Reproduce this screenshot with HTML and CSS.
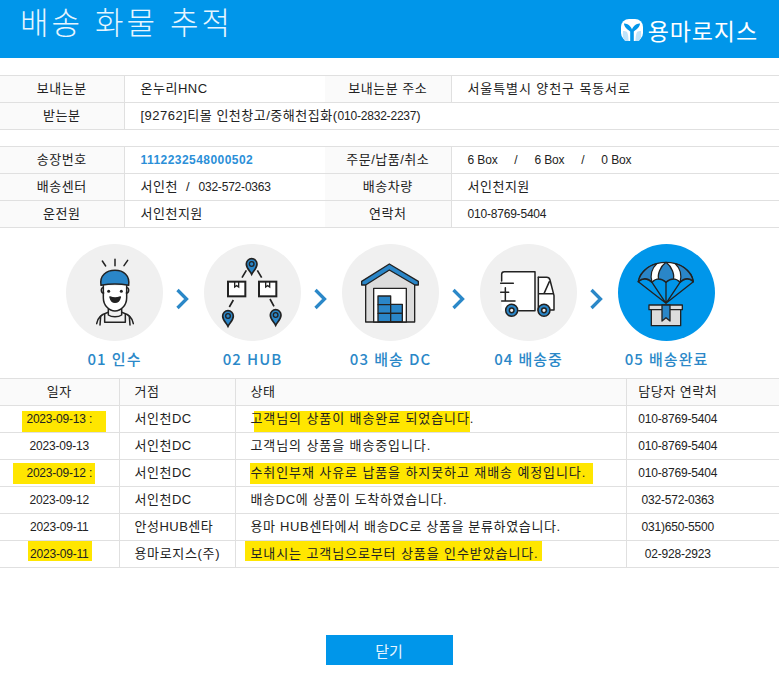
FILE: index.html
```html
<!DOCTYPE html>
<html lang="ko">
<head>
  <meta charset="UTF-8">
  <title>배송 화물 추적</title>
  <link rel="stylesheet" href="styles.css">
</head>
<body>
  <header class="top">
    <h1>배송 화물 추적</h1>
    <div class="logo">
      <svg class="logo-mark" viewBox="0 0 22 22">
        <rect width="22" height="22" rx="8" fill="#fff"/>
        <path d="M3 4.500 C6 4 10 7 11 10.500 C12 7 16 4 19 4.500 C19 8 15 11 12.800 12.500 V22 H9.200 V12.500 C7 11 3 8 3 4.500 Z" fill="#0096ea"/>
        <path d="M6 13 C7 15 7.500 18 7.500 22 H4 C2 20 1.500 17 2 12 C3.500 12 5 12.400 6 13 Z M16 13 C15 15 14.500 18 14.500 22 H18 C20 20 20.500 17 20 12 C18.500 12 17 12.400 16 13 Z" fill="#bfe3fa"/>
      </svg>
      <span>용마로지스</span>
    </div>
  </header>

  <table class="info first">
    <colgroup><col class="c1"><col class="c2"><col class="c3"><col></colgroup>
    <tr>
      <th>보내는분</th><td>온누리HNC</td>
      <th>보내는분 주소</th><td class="wide">서울특별시 양천구 목동서로</td>
    </tr>
    <tr>
      <th>받는분</th><td colspan="3">[92762]티몰 인천창고/중해천집화(<span class="num">010-2832-2237</span>)</td>
    </tr>
  </table>

  <table class="info">
    <colgroup><col class="c1"><col class="c2"><col class="c3"><col></colgroup>
    <tr>
      <th>송장번호</th><td class="invoice">1112232548000502</td>
      <th>주문/납품/취소</th><td class="num boxes">6 Box &nbsp;&nbsp;&nbsp;&nbsp;/&nbsp;&nbsp;&nbsp;&nbsp; 6 Box &nbsp;&nbsp;&nbsp;&nbsp;/&nbsp;&nbsp;&nbsp;&nbsp; 0 Box</td>
    </tr>
    <tr>
      <th>배송센터</th><td>서인천 &nbsp;/&nbsp; <span class="num">032-572-0363</span></td>
      <th>배송차량</th><td>서인천지원</td>
    </tr>
    <tr>
      <th>운전원</th><td>서인천지원</td>
      <th>연락처</th><td class="num">010-8769-5404</td>
    </tr>
  </table>

  <div class="steps">
    <div class="step">
      <div class="circle">
        <svg viewBox="48 27 291 291">
          <g fill="none" stroke="#222" stroke-width="4.500" stroke-linecap="round" stroke-linejoin="round">
            <path d="M157 78 L167 93 M195 73 V92 M233 76 L222 92"/>
            <path d="M160 152 V188 C160 212 178 228 195 228 C212 228 230 212 230 188 V152" fill="#fff"/>
            <path d="M159 158 C152 158 152 174 161 174 M231 158 C238 158 238 174 229 174"/>
            <path d="M153 151 C148 120 170 106 195 106 C220 106 240 120 236 151 C210 146 180 146 153 151 Z" fill="#2a86c8"/>
            <path d="M175 222 V240 C185 247 205 247 215 240 V222"/>
            <path d="M140 266 C142 248 155 238 175 232 M250 266 C248 248 235 238 215 232"/>
            <path d="M164 236 V262 H226 V236 M152 244 L150 270 M238 244 L240 270"/>
            <path d="M180 186 Q195 192 211 186 Q207 202 195 202 Q184 202 180 186 Z" fill="#222"/>
          </g>
          <circle cx="176" cy="169" r="4.500" fill="#222"/>
          <circle cx="214" cy="169" r="4.500" fill="#222"/>
        </svg>
      </div>
      <div class="step-name">01 인수</div>
    </div>
    <svg class="chevron" viewBox="0 0 14 22"><path d="M2 2 L11 11 L2 20"/></svg>
    <div class="step">
      <div class="circle">
        <svg viewBox="462 27 291 291">
          <defs>
            <g id="pin">
              <path d="M0 28 C-5 18 -16 10 -16 -3 A16 16 0 0 1 16 -3 C16 10 5 18 0 28 Z" fill="#2a86c8" stroke="#222" stroke-width="5"/>
              <circle cy="-3" r="7" fill="#2a86c8" stroke="#222" stroke-width="4"/>
            </g>
            <g id="parcel" fill="none" stroke="#222" stroke-width="6">
              <rect x="0" y="0" width="52" height="44" fill="#fff"/>
              <path d="M20 0 V16 L26 12 L32 16 V0" stroke-width="4"/>
            </g>
          </defs>
          <use href="#pin" x="605" y="90"/>
          <use href="#pin" x="534" y="246"/>
          <use href="#pin" x="677" y="243"/>
          <use href="#parcel" x="534" y="140"/>
          <use href="#parcel" x="627" y="140"/>
          <path d="M589 106 L576 128 M622 106 L635 128 M550 195 L538 216 M660 192 L672 214" fill="none" stroke="#222" stroke-width="5"/>
        </svg>
      </div>
      <div class="step-name">02 HUB</div>
    </div>
    <svg class="chevron" viewBox="0 0 14 22"><path d="M2 2 L11 11 L2 20"/></svg>
    <div class="step">
      <div class="circle">
        <svg viewBox="126 27 291 291">
          <g stroke="#222" stroke-width="4" stroke-linejoin="round">
            <path d="M197 146 L268 103 L344 146 V261 H197 Z" fill="#dcdcdc"/>
            <path d="M185 150 V139 L268 87 L355 139 V150 H345 L268 105 L197 150 Z" fill="#2a86c8"/>
            <rect x="221" y="160" width="98" height="101" fill="#fff"/>
            <rect x="234" y="183" width="38" height="26" fill="#2a86c8"/>
            <rect x="234" y="209" width="38" height="26" fill="#2a86c8"/>
            <rect x="234" y="235" width="38" height="25" fill="#2a86c8"/>
            <rect x="272" y="208" width="35" height="27" fill="#2a86c8"/>
            <rect x="272" y="235" width="35" height="25" fill="#2a86c8"/>
          </g>
        </svg>
      </div>
      <div class="step-name">03 배송 DC</div>
    </div>
    <svg class="chevron" viewBox="0 0 14 22"><path d="M2 2 L11 11 L2 20"/></svg>
    <div class="step">
      <div class="circle">
        <svg viewBox="60 27 291 291">
          <path d="M125 110 H225 V227 H125 Z M235 127 H262 L282 182 V225 H235 Z" fill="#fff"/>
          <g fill="none" stroke="#222" stroke-width="4.500" stroke-linejoin="round" stroke-linecap="round">
            <path d="M125 138 V118 Q125 110 133 110 H225 V227 H176"/>
            <path d="M122 145 H160 M122 172 H146 M125 198 H165 M136 158 V198"/>
            <path d="M235 127 H260 Q268 127 270 135 L282 182 V225 H272"/>
            <path d="M235 176 H252 L268 140 M235 127 V227 M252 176 H280"/>
            <circle cx="155" cy="226" r="18" fill="#2a86c8"/>
            <circle cx="155" cy="226" r="7" fill="#f0f0f0"/>
            <circle cx="252" cy="226" r="18" fill="#2a86c8"/>
            <circle cx="252" cy="226" r="7" fill="#f0f0f0"/>
          </g>
        </svg>
      </div>
      <div class="step-name">04 배송중</div>
    </div>
    <svg class="chevron" viewBox="0 0 14 22"><path d="M2 2 L11 11 L2 20"/></svg>
    <div class="step">
      <div class="circle on">
        <svg viewBox="474 27 291 291">
          <g stroke="#222" stroke-width="4" stroke-linejoin="round" stroke-linecap="round">
            <path d="M535 140 C540 105 580 82 618 82 C656 82 696 105 700 140 C690 128 672 128 660 142 C648 128 630 128 618 142 C606 128 588 128 576 142 C564 128 546 128 535 140 Z" fill="#fff"/>
            <path d="M590 86 C575 100 570 122 576 142 C564 128 546 128 535 140 C540 112 565 92 590 86 Z" fill="#2a86c8"/>
            <path d="M618 82 C600 95 592 120 596 132 C604 132 612 136 618 142 C624 136 632 132 640 132 C644 120 636 95 618 82 Z" fill="#2a86c8"/>
            <path d="M646 86 C661 100 666 122 660 142 C672 128 690 128 700 140 C695 112 671 92 646 86 Z" fill="#2a86c8"/>
            <path d="M535 140 L618 205 M576 142 L618 205 M618 142 V205 M660 142 L618 205 M700 140 L618 205" fill="none"/>
            <rect x="574" y="222" width="88" height="50" fill="#dcdcdc"/>
            <rect x="567" y="210" width="100" height="14" fill="#dcdcdc"/>
            <path d="M606 210 H630 V258 L618 248 L606 258 Z" fill="#2a86c8"/>
          </g>
        </svg>
      </div>
      <div class="step-name">05 배송완료</div>
    </div>
  </div>

  <table class="history">
    <colgroup><col class="h1"><col class="h2"><col class="h3"><col></colgroup>
    <tr class="head">
      <th>일자</th><th class="left">거점</th><th class="left">상태</th><th>담당자 연락처</th>
    </tr>
    <tr>
      <td class="num mid"><span class="mark date-a">2023-09-13 :</span></td>
      <td>서인천DC</td>
      <td class="wide"><span class="mark msg-a">고객님의 상품이 배송완료 되었습니다</span>.</td>
      <td class="num mid">010-8769-5404</td>
    </tr>
    <tr>
      <td class="num mid">2023-09-13</td>
      <td>서인천DC</td>
      <td class="wide">고객님의 상품을 배송중입니다.</td>
      <td class="num mid">010-8769-5404</td>
    </tr>
    <tr>
      <td class="num mid"><span class="mark date-b">2023-09-12 :</span></td>
      <td>서인천DC</td>
      <td class="wide"><span class="mark msg-b">수취인부재 사유로 납품을 하지못하고 재배송 예정입니다.</span></td>
      <td class="num mid">010-8769-5404</td>
    </tr>
    <tr>
      <td class="num mid">2023-09-12</td>
      <td>서인천DC</td>
      <td class="semi">배송DC에 상품이 도착하였습니다.</td>
      <td class="num mid">032-572-0363</td>
    </tr>
    <tr>
      <td class="num mid">2023-09-11</td>
      <td>안성HUB센타</td>
      <td class="semi">용마 HUB센타에서 배송DC로 상품을 분류하였습니다.</td>
      <td class="num mid">031)650-5500</td>
    </tr>
    <tr>
      <td class="num mid"><span class="mark date-c">2023-09-11</span></td>
      <td class="semi">용마로지스(주)</td>
      <td class="wide"><span class="mark msg-c">보내시는 고객님으로부터 상품을 인수받았습니다.</span></td>
      <td class="num mid">02-928-2923</td>
    </tr>
  </table>

  <div class="bottom">
    <button class="close-btn">닫기</button>
  </div>
</body>
</html>
```

FILE: styles.css
```css
body {
  margin: 0;
  background-color: #fff;
  color: #222;
  font-family: "Liberation Sans", "Noto Sans CJK KR", sans-serif;
  font-size: 13px;
  letter-spacing: 0.5px;
}

.top {
  display: flex;
  justify-content: space-between;
  height: 58px;
  padding: 0 21px 0 20px;
  background-color: #0096ea;
  color: #fff;
}

.top h1 {
  margin: 0;
  padding-top: 4px;
  font-size: 31px;
  font-weight: 300;
  line-height: 40px;
  letter-spacing: 3.1px;
  color: #e6f5ff;
}

.logo {
  display: flex;
  align-items: center;
  gap: 5px;
  padding-top: 2px;
  font-size: 23px;
  font-weight: 400;
  letter-spacing: 0.9px;
}

.logo-mark {
  width: 22px;
  height: 22px;
}

table {
  width: 100%;
  border-collapse: collapse;
  table-layout: fixed;
}

th, td {
  height: 26px;
  padding: 0;
  border-top: 1px solid #e0e0e0;
  border-bottom: 1px solid #e0e0e0;
  font-weight: 400;
  line-height: 16px;
}

.info {
  margin-top: 16px;
}

.info.first {
  margin-top: 17px;
}

.info th {
  background-color: #fafafa;
  border-right: 1px solid #e0e0e0;
  text-align: center;
}

.info td {
  padding-left: 16px;
}

.c1 { width: 124px; }
.c2 { width: 201px; }
.c3 { width: 126px; }

.num {
  font-size: 12px;
  letter-spacing: -0.2px;
}

.boxes {
  word-spacing: 0.25px;
}

.wide {
  letter-spacing: 0.9px;
}

.semi {
  letter-spacing: 0.65px;
}

.invoice {
  color: #2b8fd8;
  font-size: 12px;
  font-weight: 700;
  letter-spacing: 0.45px;
}

/* delivery steps */
.steps {
  display: flex;
  justify-content: center;
  margin-top: 16px;
  padding-left: 2px;
}

.step {
  width: 97px;
}

.circle {
  width: 97px;
  height: 97px;
  border-radius: 50%;
  background-color: #f0f0f0;
}

.circle.on {
  background-color: #0096ea;
}

.circle svg {
  display: block;
  width: 97px;
  height: 97px;
}

.step-name {
  margin: 8px -20px 0;
  color: #2b88c8;
  font-family: "Noto Sans CJK KR", sans-serif;
  font-size: 15px;
  font-weight: 500;
  line-height: 20px;
  letter-spacing: 1px;
  text-align: center;
  white-space: nowrap;
}

.chevron {
  flex: none;
  width: 41px;
  height: 22px;
  margin: 44px 1px 0 -1px;
}

.chevron path {
  fill: none;
  stroke: #2b88c8;
  stroke-width: 3.3;
}

/* history table */
.history {
  margin-top: 9px;
}

.history th, .history td {
  border-right: 1px solid #e0e0e0;
}

.history tr > :last-child {
  padding-right: 50px;
  border-right: none;
}

.history td {
  padding-left: 15px;
}

.history .mid {
  padding-left: 0;
  text-align: center;
}

.head th {
  background-color: #fafafa;
  text-align: center;
}

.head th.left {
  padding-left: 15px;
  text-align: left;
}

.h1 { width: 119px; }
.h2 { width: 116px; }
.h3 { width: 391px; }

/* hand painted yellow highlights, they sit behind the text */
.mark {
  position: relative;
  z-index: 0;
  display: inline-block;
}

.mark::before {
  content: "";
  position: absolute;
  z-index: -1;
  background-color: #ffe600;
}

.date-a::before { top: 0; bottom: -5px; left: -4px; right: -14px; }
.date-b::before { top: -2px; bottom: -3px; left: -13px; right: -3px; }
.date-c::before { top: -5px; bottom: 1px; left: -2px; right: -3px; }
.msg-a::before { top: 0; bottom: -5px; left: 3px; right: 0; }
.msg-b::before { top: -2px; bottom: -3px; left: -1px; right: -7px; }
.msg-c::before { top: -5px; bottom: 1px; left: -6px; right: -3px; }

.bottom {
  display: flex;
  justify-content: center;
  margin-top: 67px;
  padding-right: 1px;
}

.close-btn {
  width: 127px;
  height: 30px;
  border: none;
  background-color: #0096ea;
  color: #e6f5ff;
  font-family: inherit;
  font-size: 15px;
}
```
